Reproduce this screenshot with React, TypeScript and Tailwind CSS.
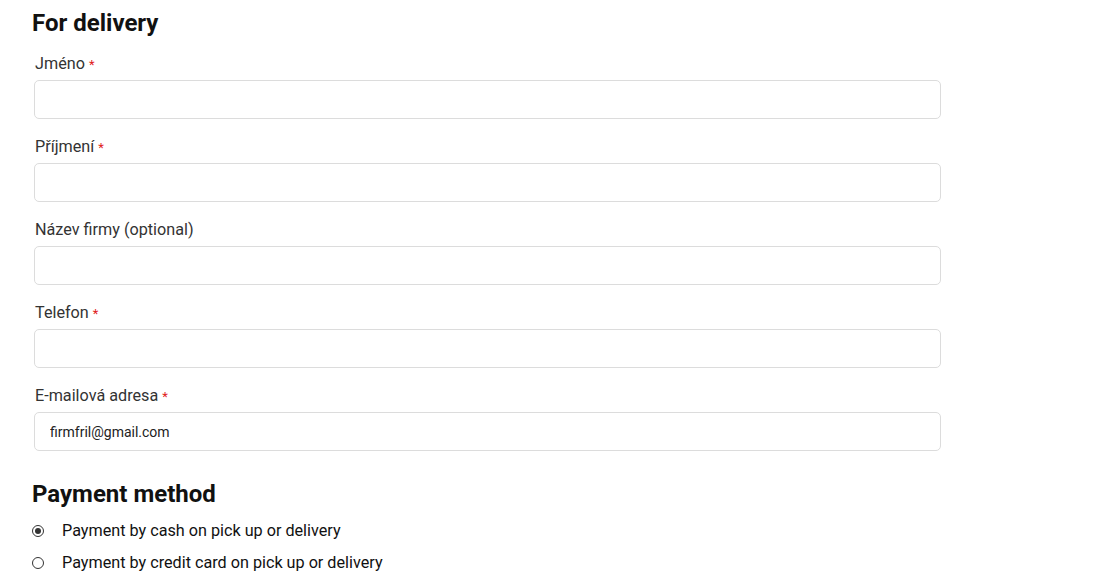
import React, { useState } from 'react';

const fields = [
  { label: 'Jméno', required: true, value: '' },
  { label: 'Příjmení', required: true, value: '' },
  { label: 'Název firmy (optional)', required: false, value: '' },
  { label: 'Telefon', required: true, value: '' },
  { label: 'E-mailová adresa', required: true, value: 'firmfril@gmail.com' },
];

export default function App() {
  const [payment, setPayment] = useState('cash');

  return (
    <div className="min-h-[584px] bg-white font-['Roboto',sans-serif] text-[#222]">
      <div className="w-[940px] pl-[32px] pt-[9px]">
        {/* Delivery */}
        <h2 className="text-[24px] font-bold leading-[28px] text-[#111]">For delivery</h2>
        <div className="mt-[16px] flex flex-col gap-[17px] pl-[2px]">
          {fields.map((f) => (
            <div key={f.label} className="flex flex-col">
              <label className="block h-[22px] overflow-visible pl-[1px] text-[16.2px] leading-[22px] text-[#333]">
                {f.label}
                {f.required && <span className="ml-[4px] text-[13px] text-[#e02020]">*</span>}
              </label>
              <input
                defaultValue={f.value}
                className="mt-[5px] h-[39px] w-[907px] rounded-[5px] border border-[#dcdcdc] bg-white px-[15px] text-[14px] text-[#222] outline-none"
              />
            </div>
          ))}
        </div>

        {/* Payment */}
        <h2 className="mt-[29px] text-[24px] font-bold leading-[28px] text-[#111]">Payment method</h2>
        <div className="mt-[12px] flex flex-col gap-[10px]">
          {[
            { id: 'cash', label: 'Payment by cash on pick up or delivery' },
            { id: 'card', label: 'Payment by credit card on pick up or delivery' },
          ].map((o) => (
            <label key={o.id} className="flex h-[22px] items-center gap-[18px] text-[16.2px] text-[#111]">
              <span
                onClick={() => setPayment(o.id)}
                className="flex h-[12px] w-[12px] items-center justify-center rounded-full border border-[#333]"
              >
                {payment === o.id && <span className="h-[6px] w-[6px] rounded-full bg-[#333]" />}
              </span>
              <span>{o.label}</span>
            </label>
          ))}
        </div>
      </div>
    </div>
  );
}
